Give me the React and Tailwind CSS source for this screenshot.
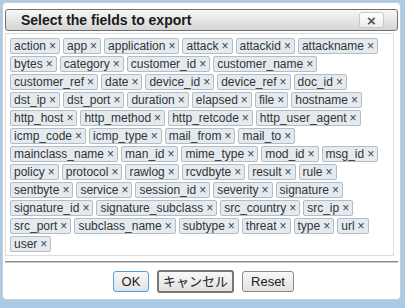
import React from "react";

const fields = [
  "action","app","application","attack","attackid","attackname",
  "bytes","category","customer_id","customer_name",
  "customer_ref","date","device_id","device_ref","doc_id",
  "dst_ip","dst_port","duration","elapsed","file","hostname",
  "http_host","http_method","http_retcode","http_user_agent",
  "icmp_code","icmp_type","mail_from","mail_to",
  "mainclass_name","man_id","mime_type","mod_id","msg_id",
  "policy","protocol","rawlog","rcvdbyte","result","rule",
  "sentbyte","service","session_id","severity","signature",
  "signature_id","signature_subclass","src_country","src_ip",
  "src_port","subclass_name","subtype","threat","type","url",
  "user",
];

export default function App() {
  return (
    <div
      className="w-[405px] h-[308px] bg-[#a9cbe8] pt-[2px] pl-[2px] overflow-hidden"
      style={{ fontFamily: '"Liberation Sans", Arial, "Noto Sans CJK JP", sans-serif' }}
    >
      <div className="w-[399px] h-[298px] bg-white rounded-[4px] border border-[#c9ccd0] flex flex-col px-[1px] pt-[6px]">
        <div className="h-[22px] mx-[1px] rounded-[3px] border border-[#6f6f6f] bg-gradient-to-b from-[#f7f7f7] to-[#d5d5d5] flex items-center justify-between pl-[15px] pr-[13px]">
          <span className="text-[14px] font-bold text-[#1a1a1a]">Select the fields to export</span>
          <div className="w-[25px] h-[16px] rounded-[3px] border border-[#c8c8c8] bg-gradient-to-b from-white to-[#ececec] flex items-center justify-center text-[15px] font-bold text-[#555] leading-none">
            ×
          </div>
        </div>
        <div className="mt-[2px] ml-[1px] w-[389px] h-[223px] border border-[#dcdcdc] pl-[4px] pt-[4px] pr-[2px]">
          <div className="flex flex-wrap gap-x-[3px] gap-y-[2px]">
            {fields.map((f) => (
              <span
                key={f}
                className="h-[16px] px-[3px] border border-[#b4bcc4] rounded-[2px] bg-[#e4ebf0] text-[12px] leading-[14px] text-[#333] flex items-center whitespace-nowrap"
              >
                {f}
                <span className="ml-[3px] text-[#444]">×</span>
              </span>
            ))}
          </div>
        </div>
        <div className="mt-[5px] mx-[1px] h-[2px] bg-[#8a8a8a] border-b border-[#c8c8c8]" />
        <div className="flex justify-center gap-[8px] mt-[8px] text-[13px] text-[#222] pl-[4px]">
          <div className="w-[36px] h-[21px] rounded-[3px] border border-[#4aa3df] bg-gradient-to-b from-[#f8f8f8] to-[#e2e2e2] flex items-center justify-center">OK</div>
          <div className="w-[77px] h-[23px] -mt-[1px] rounded-[3px] border-2 border-[#777] bg-gradient-to-b from-[#f8f8f8] to-[#e2e2e2] flex items-center justify-center">キャンセル</div>
          <div className="w-[52px] h-[21px] rounded-[3px] border border-[#888] bg-gradient-to-b from-[#f8f8f8] to-[#e2e2e2] flex items-center justify-center">Reset</div>
        </div>
      </div>
    </div>
  );
}
